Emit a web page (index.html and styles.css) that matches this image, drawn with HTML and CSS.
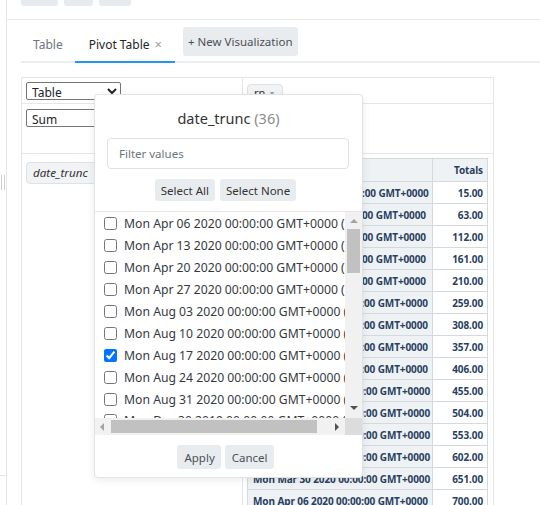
FILE: index.html
```html
<!DOCTYPE html>
<html lang="en">
<head>
<meta charset="utf-8">
<title>Pivot Table</title>
<link rel="stylesheet" href="styles.css">
</head>
<body>
<div class="app">
  <aside class="rail">
    <div class="rail-handle"></div>
    <div class="rail-foot"></div>
  </aside>
  <main class="main">
    <div class="topbar">
      <span class="tb-btn tb-1"></span>
      <span class="tb-btn tb-2"></span>
      <span class="tb-btn tb-3"></span>
    </div>
    <div class="content">
      <nav class="tabs">
        <span class="tab">Table</span>
        <span class="tab active">Pivot Table <span class="close">×</span></span>
        <button class="new-vis">+ New Visualization</button>
      </nav>
      <div class="pivot">
        <div class="cell c-renderer">
          <select class="sel sel-renderer"><option>Table</option></select>
        </div>
        <div class="cell c-unused">
          <span class="pill pill-rn">rn <span class="caret">▾</span></span>
        </div>
        <div class="cell c-agg">
          <select class="sel sel-agg"><option>Sum</option></select>
        </div>
        <div class="cell c-cols"></div>
        <div class="cell c-rows">
          <span class="pill pill-row">date_trunc</span>
        </div>
        <div class="cell c-output">
          <table class="pvt">
            <colgroup><col class="col-label"><col class="col-total"></colgroup>
            <thead>
              <tr><th class="axis">date_trunc</th><th class="tot">Totals</th></tr>
            </thead>
            <tbody>
              <tr><th>Mon Dec 30 2019 00:00:00 GMT+0000</th><td>15.00</td></tr>
              <tr><th>Mon Jan 06 2020 00:00:00 GMT+0000</th><td>63.00</td></tr>
              <tr><th>Mon Jan 13 2020 00:00:00 GMT+0000</th><td>112.00</td></tr>
              <tr><th>Mon Jan 20 2020 00:00:00 GMT+0000</th><td>161.00</td></tr>
              <tr><th>Mon Jan 27 2020 00:00:00 GMT+0000</th><td>210.00</td></tr>
              <tr><th>Mon Feb 03 2020 00:00:00 GMT+0000</th><td>259.00</td></tr>
              <tr><th>Mon Feb 10 2020 00:00:00 GMT+0000</th><td>308.00</td></tr>
              <tr><th>Mon Feb 17 2020 00:00:00 GMT+0000</th><td>357.00</td></tr>
              <tr><th>Mon Feb 24 2020 00:00:00 GMT+0000</th><td>406.00</td></tr>
              <tr><th>Mon Mar 02 2020 00:00:00 GMT+0000</th><td>455.00</td></tr>
              <tr><th>Mon Mar 09 2020 00:00:00 GMT+0000</th><td>504.00</td></tr>
              <tr><th>Mon Mar 16 2020 00:00:00 GMT+0000</th><td>553.00</td></tr>
              <tr><th>Mon Mar 23 2020 00:00:00 GMT+0000</th><td>602.00</td></tr>
              <tr><th>Mon Mar 30 2020 00:00:00 GMT+0000</th><td>651.00</td></tr>
              <tr><th>Mon Apr 06 2020 00:00:00 GMT+0000</th><td>700.00</td></tr>
            </tbody>
          </table>
        </div>
      </div>
    </div>
  </main>

  <div class="popup">
    <div class="pop-title">date_trunc <span class="count">(36)</span></div>
    <div class="pop-search"><input type="text" placeholder="Filter values"></div>
    <div class="pop-actions">
      <button class="btn">Select All</button>
      <button class="btn">Select None</button>
    </div>
    <div class="pop-body">
      <div class="pop-scroll">
        <div class="pop-list">
          <label class="item"><input type="checkbox"> Mon Apr 06 2020 00:00:00 GMT+0000 (Coordinated Universal Time)</label>
          <label class="item"><input type="checkbox"> Mon Apr 13 2020 00:00:00 GMT+0000 (Coordinated Universal Time)</label>
          <label class="item"><input type="checkbox"> Mon Apr 20 2020 00:00:00 GMT+0000 (Coordinated Universal Time)</label>
          <label class="item"><input type="checkbox"> Mon Apr 27 2020 00:00:00 GMT+0000 (Coordinated Universal Time)</label>
          <label class="item"><input type="checkbox"> Mon Aug 03 2020 00:00:00 GMT+0000 (Coordinated Universal Time)</label>
          <label class="item"><input type="checkbox"> Mon Aug 10 2020 00:00:00 GMT+0000 (Coordinated Universal Time)</label>
          <label class="item"><input type="checkbox" checked> Mon Aug 17 2020 00:00:00 GMT+0000 (Coordinated Universal Time)</label>
          <label class="item"><input type="checkbox"> Mon Aug 24 2020 00:00:00 GMT+0000 (Coordinated Universal Time)</label>
          <label class="item"><input type="checkbox"> Mon Aug 31 2020 00:00:00 GMT+0000 (Coordinated Universal Time)</label>
          <label class="item"><input type="checkbox"> Mon Dec 30 2019 00:00:00 GMT+0000 (Coordinated Universal Time)</label>
        </div>
        <div class="vbar">
          <span class="arr arr-up"></span>
          <span class="vthumb"></span>
          <span class="vspace"></span>
          <span class="arr arr-down"></span>
        </div>
      </div>
      <div class="hbar">
        <div class="htrack">
          <span class="harr arr-left"></span>
          <span class="hthumb"></span>
          <span class="hspace"></span>
          <span class="harr arr-right"></span>
        </div>
        <div class="corner"></div>
      </div>
    </div>
    <div class="pop-footer">
      <button class="btn btn-lg">Apply</button>
      <button class="btn btn-lg">Cancel</button>
    </div>
  </div>
</div>
</body>
</html>
```

FILE: styles.css
```css
* { box-sizing: border-box; }

html, body {
  margin: 0;
  padding: 0;
}

body {
  width: 540px;
  height: 505px;
  overflow: hidden;
  font-family: "Noto Sans", "Open Sans", sans-serif;
  color: #212529;
  background: #fff;
}

.app {
  position: relative;
  display: flex;
  height: 505px;
}

/* left rail */
.rail {
  width: 7px;
  flex: none;
  border-right: 1px solid #e6e6e6;
  display: flex;
  flex-direction: column;
}
.rail-handle {
  margin: 175px 0 0 1px;
  width: 4px;
  height: 15px;
  border-left: 1px solid #cfcfcf;
  border-right: 1px solid #cfcfcf;
}
.rail-foot {
  margin-top: auto;
  margin-bottom: 29px;
  height: 1px;
  width: 6px;
  background: #e6e6e6;
}

.main {
  flex: 1;
  min-width: 0;
}

/* top toolbar remnants */
.topbar {
  height: 20px;
  border-bottom: 1px solid #e8e8e8;
  display: flex;
  gap: 6px;
  padding-left: 14px;
  align-items: flex-start;
}
.tb-btn {
  height: 6px;
  background: #e8ebee;
  border-radius: 0 0 3px 3px;
}
.tb-1 { width: 37px; }
.tb-2 { width: 29px; }
.tb-3 { width: 32px; }

.content {
  padding: 7px 0 0 14px;
}

/* tabs */
.tabs {
  display: flex;
  height: 36px;
  border-bottom: 2px solid #eceff1;
}
.tab {
  display: flex;
  align-items: center;
  padding: 0 12px;
  margin-bottom: -2px;
  border-bottom: 2px solid transparent;
  font-size: 12px;
  color: #6c757d;
}
.tab.active {
  color: #212529;
  border-bottom-color: #2196f3;
  padding: 0 13px 0 14px;
}
.close {
  color: #9aa0a6;
  margin-left: 5px;
  font-size: 13px;
}
.new-vis {
  align-self: flex-start;
  margin-left: 8px;
  height: 29px;
  padding: 0 5px;
  border: 0;
  border-radius: 3px;
  background: #e9ecef;
  color: #495057;
  font-family: inherit;
  font-size: 11.5px;
}

/* pivot ui */
.pivot {
  margin-top: 14px;
  width: 473px;
  height: 428px;
  display: grid;
  grid-template-columns: 221px 1fr;
  grid-template-rows: 26px 50px 1fr;
  border: 1px solid #e6e6e6;
  border-bottom: none;
}
.cell {
  border-bottom: 1px solid #e6e6e6;
  min-width: 0;
}
.c-renderer, .c-agg, .c-rows {
  border-right: 1px solid #e6e6e6;
}
.c-rows, .c-output { border-bottom: none; }

.c-renderer { padding: 4px 0 0 4px; }
.c-agg { padding: 5px 0 0 4px; }
.c-unused { padding: 2px 0 0 4px; }
.c-rows { padding: 6px 0 0 4px; }
.c-output { padding: 4px 0 0 4px; overflow: hidden; }

.sel {
  display: block;
  width: 95px;
  height: 18px;
  padding: 0 1px;
  font-family: inherit;
  font-size: 12px;
  color: #212529;
  border: 1px solid #767676;
  border-radius: 2px;
  background: #fff;
}

.pill {
  display: inline-flex;
  align-items: center;
  background: #f1f3f5;
  border: 1px solid #dde2e6;
  border-radius: 4px;
  color: #333;
}
.pill-rn {
  height: 17px;
  width: 36px;
  padding: 0 6px;
  font-size: 11px;
}
.caret {
  color: #9aa0a6;
  font-size: 8px;
  margin-left: 5px;
}
.pill-row {
  height: 22px;
  padding: 0 6px;
  font-style: italic;
  font-size: 11.6px;
  width: 90px;
}

/* output table */
.pvt {
  border-collapse: collapse;
  table-layout: fixed;
  width: 240px;
  font-size: 10px;
  letter-spacing: -0.1px;
  font-weight: bold;
  color: #2a3f5f;
}
.col-label { width: 185px; }
.col-total { width: 55px; }
.pvt th, .pvt td {
  border: 1px solid #d2d9df;
  height: 22px;
  padding: 0 4px 0 5px;
  white-space: nowrap;
  overflow: hidden;
}
.pvt thead th {
  height: 23px;
  background: #eef2f5;
}
.pvt th {
  background: #eef2f5;
  text-align: left;
}
.pvt thead th.tot,
.pvt td {
  text-align: right;
  background: #fff;
}
.pvt thead th.tot { background: #eef2f5; }

/* popup */
.popup {
  position: absolute;
  left: 94px;
  top: 94px;
  width: 269px;
  height: 384px;
  background: #fff;
  border: 1px solid #e2e2e2;
  border-radius: 4px;
  box-shadow: 0 2px 8px rgba(0, 0, 0, 0.08);
  display: flex;
  flex-direction: column;
}
.pop-title {
  margin-top: 12px;
  line-height: 22px;
  text-align: center;
  font-size: 14.5px;
  color: #333;
}
.count { color: #8c8c8c; }

.pop-search {
  margin: 9px 13px 0 12px;
}
.pop-search input {
  display: block;
  width: 100%;
  height: 31px;
  padding: 0 11px;
  border: 1px solid #dee2e6;
  border-radius: 4px;
  font-family: inherit;
  font-size: 11.5px;
  color: #333;
  outline: none;
}
.pop-search input::placeholder { color: #6c757d; }

.pop-actions {
  display: flex;
  justify-content: center;
  gap: 5px;
  margin: 10px 0 10px;
  padding-right: 6px;
}
.btn {
  height: 22px;
  padding: 0 6px;
  border: 0;
  border-radius: 3px;
  background: #e9ecef;
  color: #333;
  font-family: inherit;
  font-size: 11.5px;
}
.btn-lg {
  height: 24px;
  padding: 0 6px 0 7px;
  color: #495057;
}

.pop-body {
  border-top: 1px solid #e6e6e6;
}
.pop-scroll {
  display: flex;
  height: 206px;
}
.pop-list {
  flex: 1;
  min-width: 0;
  overflow: hidden;
  padding-top: 1px;
}
.item {
  display: flex;
  align-items: center;
  height: 21.9px;
  padding-left: 9px;
  white-space: nowrap;
  font-size: 12.2px;
  color: #353a40;
}
.item input {
  margin: 0 7px 0 0;
  width: 13px;
  height: 13px;
  flex: none;
}

.vbar {
  width: 17px;
  flex: none;
  background: #f1f1f1;
  display: flex;
  flex-direction: column;
  align-items: center;
}
.arr {
  width: 0;
  height: 0;
  border-left: 4px solid transparent;
  border-right: 4px solid transparent;
}
.arr-up {
  margin: 7px 0 0;
  border-bottom: 4px solid #a3a3a3;
}
.vthumb {
  margin-top: 6px;
  width: 13px;
  height: 44px;
  background: #c1c1c1;
}
.vspace { flex: 1; }
.arr-down {
  margin-bottom: 8px;
  border-top: 4px solid #505050;
}

.hbar {
  display: flex;
  height: 17px;
}
.htrack {
  flex: 1;
  background: #f1f1f1;
  display: flex;
  align-items: center;
}
.harr {
  width: 0;
  height: 0;
  border-top: 4px solid transparent;
  border-bottom: 4px solid transparent;
}
.arr-left {
  margin-left: 5px;
  border-right: 4px solid #a3a3a3;
}
.hthumb {
  margin-left: 7px;
  width: 206px;
  height: 13px;
  background: #c1c1c1;
}
.hspace { flex: 1; }
.arr-right {
  margin-right: 6px;
  border-left: 4px solid #505050;
}
.corner {
  width: 17px;
  background: #dcdcdc;
}

.pop-footer {
  display: flex;
  justify-content: center;
  gap: 4px;
  padding: 10px 6px 0 0;
}
```
